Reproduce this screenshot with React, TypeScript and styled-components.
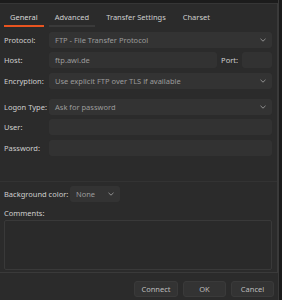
import React from 'react';
import styled, { createGlobalStyle } from 'styled-components';

const GlobalStyle = createGlobalStyle`
  html, body {
    margin: 0;
    padding: 0;
    background: #2b2b2b;
  }
  * {
    box-sizing: border-box;
  }
`;

const Window = styled.div`
  width: 282px;
  height: 300px;
  display: flex;
  flex-direction: row;
  background: #2b2b2b;
  font-family: 'Noto Sans', 'Open Sans', sans-serif;
  font-size: 7.5px;
  color: #cfcfcf;
  overflow: hidden;
`;

const Main = styled.div`
  flex: 1;
  display: flex;
  flex-direction: column;
  border-top: 3px solid #1c1c1c;
`;

const RightEdge = styled.div`
  width: 4px;
  background: #1b1b1b;
  border-left: 1px solid #3a3a3a;
`;

const Pane = styled.div`
  height: 270px;
  flex-shrink: 0;
  display: flex;
  flex-direction: column;
  border-top: 1px solid #363636;
  border-right: 1px solid #3a3a3a;
  border-bottom: 1px solid #3a3a3a;
  & > * {
    flex-shrink: 0;
  }
`;

const TabBar = styled.div`
  display: flex;
  flex-direction: row;
  align-items: stretch;
  gap: 5px;
  padding: 0 4px;
  height: 19px;
  margin-top: 4px;
`;

const Tab = styled.div<{ $active?: boolean; $hover?: boolean }>`
  display: flex;
  align-items: center;
  padding: 1px 6px 0 6px;
  color: ${(p) => (p.$active ? '#d8d8d8' : '#cfcfcf')};
  border-bottom: 2px solid
    ${(p) => (p.$active ? '#e95420' : p.$hover ? '#3a3a3a' : 'transparent')};
`;

const Form = styled.div`
  display: flex;
  flex-direction: column;
  padding: 5px 5px 0 4px;
  & > * {
    flex-shrink: 0;
  }
`;

const Row = styled.div<{ $mt?: number }>`
  display: flex;
  flex-direction: row;
  align-items: center;
  height: 16px;
  margin-top: ${(p) => p.$mt ?? 0}px;
`;

const Label = styled.div<{ $w?: number }>`
  width: ${(p) => p.$w ?? 45}px;
  flex-shrink: 0;
  white-space: nowrap;
`;

const Field = styled.div<{ $w?: number }>`
  ${(p) => (p.$w ? `width: ${p.$w}px;` : 'flex: 1;')}
  height: 16px;
  display: flex;
  align-items: center;
  padding: 0 6px;
  background: #323232;
  border-radius: 3px;
  color: #9c9c9c;
  white-space: nowrap;
`;

const Select = styled(Field)`
  justify-content: space-between;
  background: #333333;
`;

const PortLabel = styled.div`
  margin: 0 4px;
`;

const Separator = styled.div`
  height: 1px;
  background: #333333;
  margin: 25px -5px 0 -4px;
`;

const CommentsLabel = styled.div`
  margin-top: 5px;
  height: 11px;
  display: flex;
  align-items: center;
`;

const TextArea = styled.div`
  height: 50px;
  margin-top: 2px;
  border: 1px solid #393939;
  background: #2a2a2a;
  border-radius: 2px;
`;

const ButtonBar = styled.div`
  display: flex;
  flex-direction: row;
  justify-content: flex-end;
  gap: 5px;
  padding: 8px 4px 0 0;
`;

const Button = styled.div<{ $w: number }>`
  width: ${(p) => p.$w}px;
  height: 16px;
  display: flex;
  align-items: center;
  justify-content: center;
  background: #333333;
  border: 1px solid #3a3a3a;
  border-radius: 3px;
  color: #bdbdbd;
`;

const Chevron = () => (
  <svg width="6" height="4" viewBox="0 0 6 4">
    <path d="M0.5 0.8 L3 3.2 L5.5 0.8" fill="none" stroke="#9a9a9a" strokeWidth="0.9" />
  </svg>
);

export default function App() {
  return (
    <>
      <GlobalStyle />
      <Window>
        <Main>
          <Pane>
            <TabBar>
              <Tab $active>General</Tab>
              <Tab $hover>Advanced</Tab>
              <Tab>Transfer Settings</Tab>
              <Tab>Charset</Tab>
            </TabBar>
            <Form>
              <Row>
                <Label>Protocol:</Label>
                <Select>
                  FTP - File Transfer Protocol
                  <Chevron />
                </Select>
              </Row>
              <Row $mt={4}>
                <Label>Host:</Label>
                <Field>ftp.awi.de</Field>
                <PortLabel>Port:</PortLabel>
                <Field $w={30} />
              </Row>
              <Row $mt={5}>
                <Label>Encryption:</Label>
                <Select>
                  Use explicit FTP over TLS if available
                  <Chevron />
                </Select>
              </Row>
              <Row $mt={10}>
                <Label>Logon Type:</Label>
                <Select>
                  Ask for password
                  <Chevron />
                </Select>
              </Row>
              <Row $mt={4}>
                <Label>User:</Label>
                <Field />
              </Row>
              <Row $mt={5}>
                <Label>Password:</Label>
                <Field />
              </Row>
              <Separator />
              <Row $mt={4}>
                <Label $w={66}>Background color:</Label>
                <Select $w={50}>
                  None
                  <Chevron />
                </Select>
              </Row>
              <CommentsLabel>Comments:</CommentsLabel>
              <TextArea />
            </Form>
          </Pane>
          <ButtonBar>
            <Button $w={44}>Connect</Button>
            <Button $w={43}>OK</Button>
            <Button $w={43}>Cancel</Button>
          </ButtonBar>
        </Main>
        <RightEdge />
      </Window>
    </>
  );
}
